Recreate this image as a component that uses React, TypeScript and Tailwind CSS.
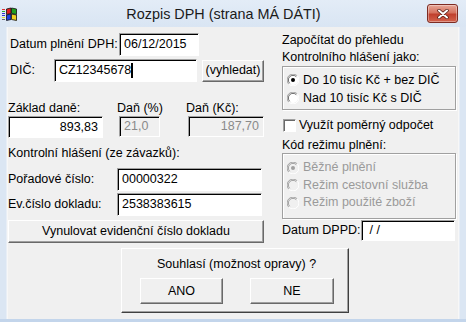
import React from "react";

const FONT = "font-['Liberation_Sans',Arial,sans-serif]";

function Field({
  w,
  h,
  value,
  align = "left",
  disabled = false,
  caret = false,
}: {
  w: string;
  h: string;
  value: string;
  align?: "left" | "right";
  disabled?: boolean;
  caret?: boolean;
}) {
  return (
    <div
      className={`${w} ${h} box-border flex items-center border border-t-[#a0a0a0] border-l-[#a0a0a0] border-b-white border-r-white shadow-[inset_1px_1px_0_#000] ${
        disabled ? "bg-[#f0f0f0] text-[#8a8a8a]" : "bg-white text-black"
      } ${align === "right" ? "justify-end pr-[4px]" : "pl-[4px]"} leading-[15px] whitespace-pre`}
    >
      <span>{value}</span>
      {caret && <span className="ml-[0px] w-[2px] h-[15px] bg-black" />}
    </div>
  );
}

function Btn({ w, h, label }: { w: string; h: string; label: string }) {
  return (
    <div
      className={`${w} ${h} box-border flex items-center justify-center bg-[#f0f0f0] border border-t-white border-l-white border-b-[#696969] border-r-[#696969] shadow-[inset_-1px_-1px_0_#a0a0a0] text-black leading-[15px]`}
    >
      {label}
    </div>
  );
}

function Radio({ checked = false, disabled = false }: { checked?: boolean; disabled?: boolean }) {
  return (
    <svg width="12" height="12" viewBox="0 0 12 12" className="shrink-0">
      <circle cx="6" cy="6" r="5" fill={disabled ? "#f0f0f0" : "#ffffff"} />
      <path d="M10.2 1.8 A5.6 5.6 0 0 0 1.8 10.2" stroke="#a0a0a0" strokeWidth="1" fill="none" />
      <path d="M9.3 2.7 A4.6 4.6 0 0 0 2.7 9.3" stroke={disabled ? "#a0a0a0" : "#696969"} strokeWidth="1" fill="none" />
      <path d="M1.8 10.2 A5.6 5.6 0 0 0 10.2 1.8" stroke="#ffffff" strokeWidth="1" fill="none" />
      {checked && <circle cx="6" cy="6" r="2" fill={disabled ? "#a0a0a0" : "#000"} />}
    </svg>
  );
}

function WinIcon() {
  return (
    <svg width="17" height="16" viewBox="0 0 17 16">
      <rect x="0" y="3" width="3" height="1" fill="#d33" />
      <rect x="0" y="5" width="3" height="1" fill="#3a3" />
      <rect x="0" y="7" width="3" height="1" fill="#33c" />
      <rect x="0" y="9" width="3" height="1" fill="#33c" />
      <rect x="0" y="11" width="3" height="1" fill="#dd3" />
      <rect x="0" y="13" width="3" height="1" fill="#666" />
      <polygon points="4.5,3 9,2 9,7.5 4.5,8.5" fill="#e02020" stroke="#111" strokeWidth="0.8" />
      <polygon points="9.5,2 14.5,3 14.5,8.5 9.5,7.5" fill="#20a020" stroke="#111" strokeWidth="0.8" />
      <polygon points="4.5,9 9,8 9,13.5 4.5,14.5" fill="#2040e0" stroke="#111" strokeWidth="0.8" />
      <polygon points="9.5,8 14.5,9 14.5,14.5 9.5,13.5" fill="#f0d020" stroke="#111" strokeWidth="0.8" />
    </svg>
  );
}

export default function App() {
  return (
    <div
      className={`${FONT} w-[466px] h-[322px] flex flex-col bg-[#dbe6f3] border-b-[3px] border-[#c3d5eb] text-[12.5px] text-black overflow-hidden`}
    >
      {/* Title bar */}
      <div className="h-[27px] shrink-0 grid grid-cols-[20px_1fr_39px] items-center bg-[linear-gradient(#e3ecf7,#d9e5f3)]">
        <div className="pl-[2px] pt-[1px]">
          <WinIcon />
        </div>
        <div className="text-center text-[14.4px] text-[#1a1a1a] leading-[18px]">
          Rozpis DPH (strana MÁ DÁTI)
        </div>
        <div>
          <div className="w-[31px] h-[19px] rounded-[3px] border border-[#7d2b22] bg-[linear-gradient(#e7a899_0%,#d5725f_45%,#c0402e_55%,#d3624c_100%)] flex items-center justify-center shadow-[inset_0_0_0_1px_rgba(255,255,255,0.35)]">
            <svg width="12" height="10" viewBox="0 0 12 10">
              <path d="M2 1.5 L10 8.5 M10 1.5 L2 8.5" stroke="#4d1710" strokeWidth="3.4" strokeLinecap="round" />
              <path d="M2 1.5 L10 8.5 M10 1.5 L2 8.5" stroke="#ffffff" strokeWidth="2" strokeLinecap="round" />
            </svg>
          </div>
        </div>
      </div>

      {/* Body */}
      <div className="flex-1 ml-[7px] mr-[7px] bg-[#f0f0f0] border-x border-[#f7f7f7] flex flex-col shadow-[-1px_0_0_#e8eef6,1px_0_0_#e8eef6]">
        <div className="flex items-start pt-[5px]">
          {/* Left column */}
          <div className="ml-[0px] pt-[1px] w-[256px] flex flex-col">
            <div className="h-[23px] flex items-center">
              <div className="pl-[2px] w-[111px] leading-[15px]">Datum plnění DPH:</div>
              <Field w="w-[80px]" h="h-[23px]" value="06/12/2015" />
            </div>
            <div className="mt-[3px] h-[23px] flex items-center">
              <div className="pl-[2px] w-[46px] leading-[15px]">DIČ:</div>
              <Field w="w-[143px]" h="h-[23px]" value="CZ12345678" caret />
              <div className="ml-[5px]">
                <Btn w="w-[62px]" h="h-[22px]" label="(vyhledat)" />
              </div>
            </div>
            <div className="mt-[19px] h-[15px] flex leading-[15px]">
              <div className="w-[109px]">Základ daně:</div>
              <div className="w-[69px]">Daň (%)</div>
              <div>Daň (Kč):</div>
            </div>
            <div className="h-[22px] flex items-start">
              <Field w="w-[95px]" h="h-[22px]" value="893,83" align="right" />
              <div className="ml-[16px]">
                <Field w="w-[41px]" h="h-[21px]" value="21,0" disabled />
              </div>
              <div className="ml-[28px]">
                <Field w="w-[76px]" h="h-[21px]" value="187,70" align="right" disabled />
              </div>
            </div>
            <div className="mt-[8px] h-[15px] leading-[15px]">Kontrolní hlášení (ze závazků):</div>
            <div className="mt-[7px] h-[23px] flex items-center">
              <div className="w-[109px] leading-[15px]">Pořadové číslo:</div>
              <Field w="w-[145px]" h="h-[23px]" value="00000322" />
            </div>
            <div className="mt-[2px] h-[23px] flex items-center">
              <div className="w-[109px] leading-[15px]">Ev.číslo dokladu:</div>
              <Field w="w-[145px]" h="h-[23px]" value="2538383615" />
            </div>
            <div className="mt-[4px]">
              <Btn w="w-[256px]" h="h-[23px]" label="Vynulovat evidenční číslo dokladu" />
            </div>
          </div>

          {/* Right column */}
          <div className="ml-[18px] w-[174px] flex flex-col">
            <div className="leading-[17px]">
              Započítat do přehledu
              <br />
              Kontrolního hlášení jako:
            </div>
            <div className="h-[44px] box-border border border-[#a0a0a0] shadow-[inset_1px_1px_0_#fff,1px_1px_0_#fff] pl-[4px] pt-[4px] flex flex-col">
              <div className="h-[18px] flex items-center gap-[4px] leading-[15px]">
                <Radio checked />
                <span>Do 10 tisíc Kč + bez DIČ</span>
              </div>
              <div className="h-[18px] flex items-center gap-[4px] leading-[15px]">
                <Radio />
                <span>Nad 10 tisíc Kč s DIČ</span>
              </div>
            </div>
            <div className="mt-[7px] h-[17px] flex items-center gap-[3px] pl-[1px] leading-[15px]">
              <div className="w-[13px] h-[13px] box-border bg-white border border-t-[#a0a0a0] border-l-[#a0a0a0] border-b-white border-r-white shadow-[inset_1px_1px_0_#696969]" />
              <span>Využít poměrný odpočet</span>
            </div>
            <div className="mt-[3px] h-[16px] leading-[16px]">Kód režimu plnění:</div>
            <div className="h-[66px] box-border border border-[#a0a0a0] shadow-[inset_1px_1px_0_#fff,1px_1px_0_#fff] pl-[4px] pt-[5px] flex flex-col text-[#9a9a9a]">
              <div className="h-[17px] flex items-center gap-[4px] leading-[15px]">
                <Radio checked disabled />
                <span>Běžné plnění</span>
              </div>
              <div className="h-[18px] flex items-center gap-[4px] leading-[15px]">
                <Radio disabled />
                <span>Režim cestovní služba</span>
              </div>
              <div className="h-[17px] flex items-center gap-[4px] leading-[15px]">
                <Radio disabled />
                <span>Režim použité zboží</span>
              </div>
            </div>
            <div className="mt-[1px] h-[21px] flex items-center">
              <div className="w-[79px] leading-[15px]">Datum DPPD:</div>
              <Field w="w-[94px]" h="h-[21px]" value={"\u00a0/ /"} />
            </div>
          </div>
        </div>

        {/* Bottom confirm panel */}
        <div className="mt-[5px] ml-[113px] w-[228px] h-[65px] box-border border border-t-white border-l-white border-b-[#404040] border-r-[#404040] shadow-[inset_-1px_-1px_0_#a0a0a0] flex flex-col pt-[8px]">
          <div className="pl-[35px] leading-[15px]">Souhlasí (možnost opravy) ?</div>
          <div className="mt-[6px] pl-[18px] flex gap-[27px]">
            <Btn w="w-[83px]" h="h-[26px]" label="ANO" />
            <Btn w="w-[84px]" h="h-[26px]" label="NE" />
          </div>
        </div>
      </div>
    </div>
  );
}
